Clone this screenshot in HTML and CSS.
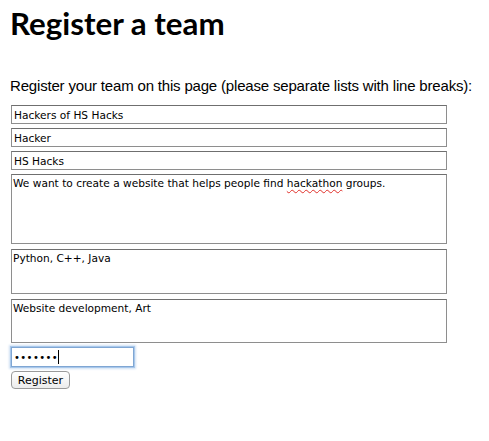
FILE: index.html
```html
<!DOCTYPE html>
<html>
<head>
<meta charset="utf-8">
<link rel="stylesheet" href="styles.css">
</head>
<body>
<main class="page">
  <h1 class="title">Register a team</h1>
  <p class="intro">Register your team on this page (please separate lists with line breaks):</p>
  <form class="form">
    <input class="field" type="text" value="Hackers of HS Hacks">
    <input class="field" type="text" value="Hacker">
    <input class="field" type="text" value="HS Hacks">
    <div class="area area-lg">We want to create a website that helps people find <span class="typo">hackathon</span> groups.</div>
    <div class="area area-md">Python, C++, Java</div>
    <div class="area area-md2">Website development, Art</div>
    <div class="password"><span class="dots">•••••••</span><span class="caret"></span></div>
    <button class="btn" type="button">Register</button>
  </form>
</main>
</body>
</html>
```

FILE: styles.css
```css
html, body {
  margin: 0;
  padding: 0;
  background: #ffffff;
}

.page {
  padding: 5px 10px 0 10px;
  font-family: "Liberation Sans", Arial, sans-serif;
  color: #000;
}

.title {
  margin: 0;
  font-family: Lato, "Liberation Sans", sans-serif;
  font-weight: 700;
  font-size: 31.3px;
  line-height: 37px;
}

.intro {
  margin: 34px 0 0 0;
  font-size: 15px;
  letter-spacing: -0.18px;
  line-height: 19px;
  white-space: nowrap;
}

.form {
  display: flex;
  flex-direction: column;
  align-items: flex-start;
  margin-top: 10px;
  padding-left: 1px;
}

.field,
.area {
  box-sizing: border-box;
  width: 436px;
  margin: 0;
  border: 1px solid #8e8e8e;
  border-top-color: #6f6f6f;
  background: #fff;
  font-family: "DejaVu Sans", "Lucida Grande", sans-serif;
  font-size: 10.6px;
  color: #000;
  outline: none;
}

.field {
  height: 19px;
  padding: 0 2px;
  margin-bottom: 4px;
}

.area {
  padding: 2px 1px;
  line-height: 13px;
  margin-bottom: 5px;
}

.area-lg { height: 70px; }
.area-md { height: 45px; }
.area-md2 { height: 44px; margin-bottom: 4px; }

.typo {
  text-decoration: underline wavy #e0302a;
  text-decoration-thickness: 1px;
  text-underline-offset: 2px;
}

.password {
  box-sizing: border-box;
  width: 123px;
  height: 20px;
  border: 1px solid #7fa6d3;
  box-shadow: 0 0 0 1px #a9c8eb, 0 0 2px 2px #cfe0f3;
  display: flex;
  align-items: center;
  padding: 0 2px;
  font-family: "DejaVu Sans", sans-serif;
  font-size: 10px;
  letter-spacing: 0.4px;
}

.caret {
  display: inline-block;
  width: 1px;
  height: 14px;
  background: #000;
  margin-left: 0;
}

.btn {
  margin-top: 4px;
  box-sizing: border-box;
  width: 59px;
  height: 18px;
  padding: 0;
  border: 1px solid #9a9a9a;
  border-radius: 4px;
  background: linear-gradient(#ffffff, #ececec);
  font-family: "DejaVu Sans", "Lucida Grande", sans-serif;
  font-size: 11px;
  color: #000;
}
```
